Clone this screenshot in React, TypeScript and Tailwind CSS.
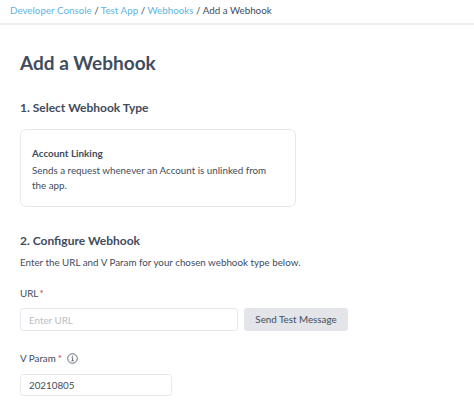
export default function App() {
  return (
    <div className="h-[404px] overflow-hidden bg-white text-[#414c5c] font-['Lato','Liberation_Sans',sans-serif]">
      {/* Breadcrumbs */}
      <div className="h-[25px] border-b-2 border-[#eeeff1] pl-[10px] pt-[2px] text-[9.8px] leading-[17px]">
        <a className="text-[#5fb4dc]">Developer Console</a>
        <span> / </span>
        <a className="text-[#5fb4dc]">Test App</a>
        <span> / </span>
        <a className="text-[#5fb4dc]">Webhooks</a>
        <span> / Add a Webhook</span>
      </div>

      <div className="px-[20px]">
        <h1 className="mt-[24px] text-[19px] leading-[28px] font-bold">Add a Webhook</h1>

        <h2 className="mt-[22px] text-[12px] leading-[18px] font-bold">1. Select Webhook Type</h2>

        <div className="mt-[12px] h-[78px] w-[276px] rounded-[6px] border border-[#e6e8eb] pl-[11px] pr-[20px] pt-[15px]">
          <div className="text-[9.9px] leading-[16px] font-bold">Account Linking</div>
          <div className="mt-[2px] text-[9.8px] leading-[14.5px]">
            Sends a request whenever an Account is unlinked from the app.
          </div>
        </div>

        <h2 className="mt-[25px] text-[12px] leading-[18px] font-bold">2. Configure Webhook</h2>
        <p className="mt-[4px] text-[9.8px] leading-[16px]">
          Enter the URL and V Param for your chosen webhook type below.
        </p>

        <div className="mt-[15px] text-[9.8px] leading-[16px]">
          URL<span className="ml-[1px] text-[#c8334a]">*</span>
        </div>
        <div className="mt-[7px] flex gap-[6px]">
          <input
            placeholder="Enter URL"
            className="h-[23px] w-[218px] rounded-[3px] border border-[#e6e8eb] px-[8px] text-[9.8px] placeholder:text-[#b9bdc4] outline-none"
          />
          <button className="h-[23px] w-[104px] rounded-[3px] bg-[#e3e5e8] text-[9.8px] text-[#414c5c]">
            Send Test Message
          </button>
        </div>

        <div className="mt-[19px] flex items-center text-[9.8px] leading-[16px]">
          <span>V Param</span>
          <span className="ml-[2px] text-[#c8334a]">*</span>
          <svg className="ml-[5px]" width="11" height="11" viewBox="0 0 12 12" fill="none" stroke="#414c5c" strokeWidth="0.9">
            <circle cx="6" cy="6" r="5.2" />
            <path d="M5 5.2h1.1v3.2M4.8 8.5h2.5" />
            <path d="M6 3v1" strokeWidth="1.2" />
          </svg>
        </div>
        <input
          defaultValue="20210805"
          className="mt-[8px] block h-[22px] w-[152px] rounded-[3px] border border-[#e6e8eb] px-[8px] text-[9.8px] text-[#414c5c] outline-none"
        />
      </div>
    </div>
  )
}
